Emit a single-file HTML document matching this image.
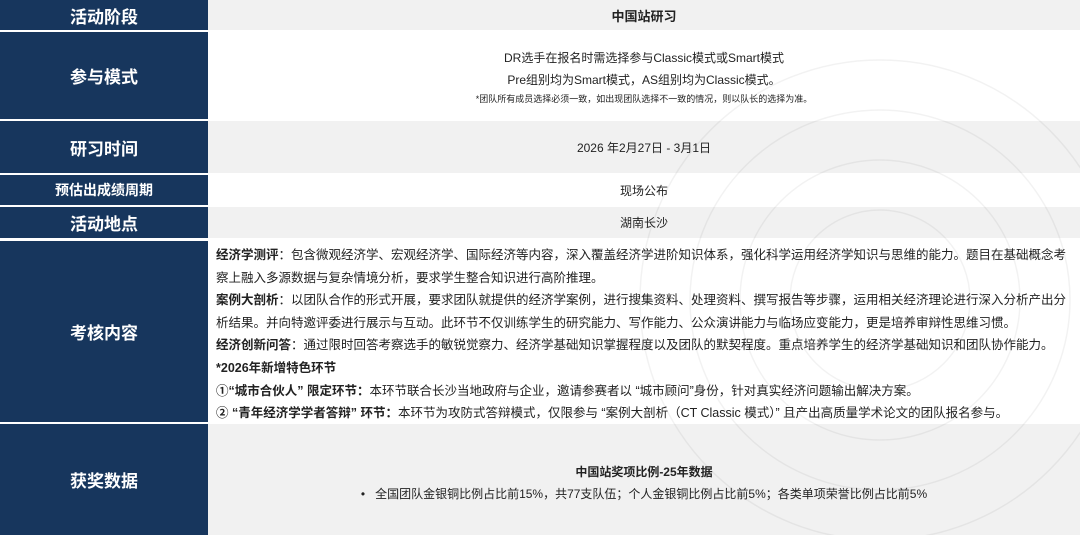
<!DOCTYPE html>
<html><head><meta charset="utf-8"><style>
*{margin:0;padding:0;box-sizing:border-box}
body{width:1080px;height:535px;overflow:hidden;background:#fff;font-family:"Liberation Sans","Noto Sans CJK SC",sans-serif;color:#222;position:relative}
.row{position:absolute;left:0;width:1080px;display:flex}
.l{width:208px;background:#17365d;color:#fff;font-weight:bold;font-size:17px;display:flex;align-items:center;justify-content:center;flex:none}
.r{flex:1;display:flex;flex-direction:column;align-items:center;justify-content:center;font-size:12px;text-align:center}
.g{background:#f1f1f1}
.w{background:#fff}
b{font-weight:bold}
svg{position:absolute;left:0;top:0;pointer-events:none}
</style></head><body>
<div class="row" style="top:0;height:30px"><div class="l">活动阶段</div><div class="r g" style="font-weight:bold;font-size:13px">中国站研习</div></div>
<div class="row" style="top:32px;height:87px"><div class="l">参与模式</div><div class="r w" style="padding-top:2px"><div style="line-height:22px">DR选手在报名时需选择参与Classic模式或Smart模式</div><div style="line-height:22px">Pre组别均为Smart模式，AS组别均为Classic模式。</div><div style="font-size:9px;line-height:16px">*团队所有成员选择必须一致，如出现团队选择不一致的情况，则以队长的选择为准。</div></div></div>
<div class="row" style="top:121px;height:52px"><div class="l">研习时间</div><div class="r g">2026 年2月27日 - 3月1日</div></div>
<div class="row" style="top:175px;height:30px"><div class="l" style="font-size:14px">预估出成绩周期</div><div class="r w">现场公布</div></div>
<div class="row" style="top:207px;height:31px"><div class="l">活动地点</div><div class="r g">湖南长沙</div></div>
<div class="row" style="top:241px;height:181px"><div class="l">考核内容</div><div class="w" style="flex:1;padding:3px 2px 0 8px;font-size:12.5px;line-height:22.6px;text-align:left">
<div><b>经济学测评</b>：包含微观经济学、宏观经济学、国际经济等内容，深入覆盖经济学进阶知识体系，强化科学运用经济学知识与思维的能力。题目在基础概念考察上融入多源数据与复杂情境分析，要求学生整合知识进行高阶推理。</div>
<div><b>案例大剖析</b>：以团队合作的形式开展，要求团队就提供的经济学案例，进行搜集资料、处理资料、撰写报告等步骤，运用相关经济理论进行深入分析产出分析结果。并向特邀评委进行展示与互动。此环节不仅训练学生的研究能力、写作能力、公众演讲能力与临场应变能力，更是培养审辩性思维习惯。</div>
<div><b>经济创新问答</b>：通过限时回答考察选手的敏锐觉察力、经济学基础知识掌握程度以及团队的默契程度。重点培养学生的经济学基础知识和团队协作能力。</div>
<div><b>*2026年新增特色环节</b></div>
<div><b>①“城市合伙人” 限定环节：</b>本环节联合长沙当地政府与企业，邀请参赛者以 “城市顾问”身份，针对真实经济问题输出解决方案。</div>
<div><b>② “青年经济学学者答辩” 环节：</b>本环节为攻防式答辩模式，仅限参与 “案例大剖析（CT Classic 模式）” 且产出高质量学术论文的团队报名参与。</div>
</div></div>
<div class="row" style="top:424px;height:111px"><div class="l">获奖数据</div><div class="r g" style="padding-top:4px"><div style="font-weight:bold;line-height:24px">中国站奖项比例-25年数据</div><div style="line-height:20px">•&nbsp;&nbsp;&nbsp;全国团队金银铜比例占比前15%，共77支队伍；个人金银铜比例占比前5%；各类单项荣誉比例占比前5%</div></div></div>
<svg width="1080" height="535"><g fill="none" stroke="#000" stroke-opacity="0.05" stroke-width="1.5">
<circle cx="880" cy="300" r="240"/><circle cx="880" cy="300" r="190"/><circle cx="880" cy="300" r="140"/><circle cx="880" cy="300" r="90"/></g></svg>
</body></html>
